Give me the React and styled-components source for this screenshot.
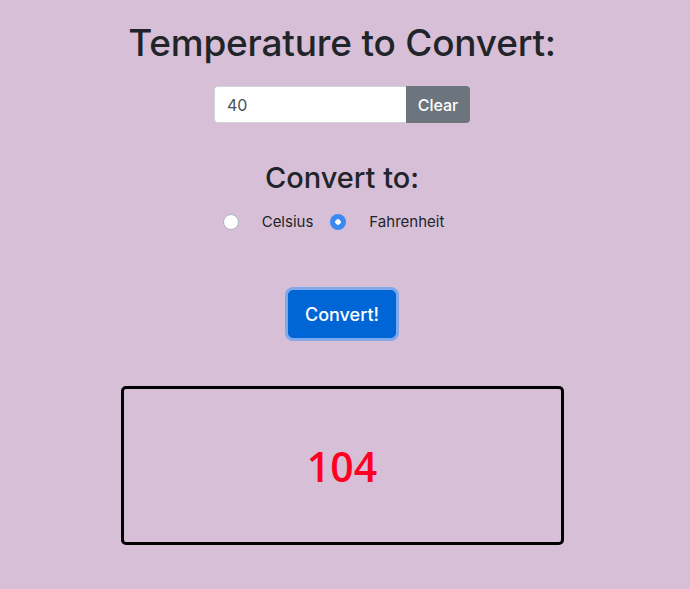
import React, { useState } from "react";
import styled, { createGlobalStyle } from "styled-components";

const GlobalStyle = createGlobalStyle`
  html, body {
    margin: 0;
    padding: 0;
    background: #d8bfd8;
  }
  body {
    font-family: Inter, "Liberation Sans", Arial, sans-serif;
    color: #212529;
  }
`;

const Page = styled.div`
  width: 684px;
  min-height: 589px;
  display: flex;
  flex-direction: column;
  align-items: center;
`;

const Title = styled.h1`
  margin: 21px 0 0;
  font-size: 37px;
  font-weight: 500;
  line-height: 1.2;
  letter-spacing: -0.2px;
`;

const InputGroup = styled.div`
  display: flex;
  margin-top: 21px;
  height: 37px;
`;

const TextInput = styled.input`
  width: 192px;
  box-sizing: border-box;
  border: 1px solid #ced4da;
  border-right: none;
  border-radius: 4px 0 0 4px;
  padding: 0 12px;
  font-family: inherit;
  font-size: 16px;
  color: #495057;
  background: #fff;
  outline: none;
`;

const ClearButton = styled.button`
  width: 64px;
  border: none;
  border-radius: 0 4px 4px 0;
  background: #6c757d;
  color: #fff;
  font-family: inherit;
  font-size: 16px;
  font-weight: 500;
  cursor: pointer;
`;

const Subtitle = styled.h2`
  margin: 38px 0 0;
  font-size: 29px;
  font-weight: 500;
  line-height: 1.2;
`;

const RadioRow = styled.div`
  display: flex;
  align-items: center;
  margin-top: 16px;
  font-size: 15px;
`;

const RadioLabel = styled.label`
  display: flex;
  align-items: center;
  cursor: pointer;
`;

const RadioDot = styled.span`
  width: 16px;
  height: 16px;
  box-sizing: border-box;
  border-radius: 50%;
  border: ${(p) => (p.checked ? "none" : "1px solid #adb5bd")};
  background: ${(p) =>
    p.checked ? "radial-gradient(circle, #fff 0 2.5px, #3b8af2 3px)" : "#fff"};
  margin: 0 23px 0 0;
`;

const HiddenRadio = styled.input`
  display: none;
`;

const RadioText = styled.span`
  margin-right: 17px;
`;

const ConvertButton = styled.button`
  margin-top: 59px;
  width: 108px;
  height: 48px;
  border: 1px solid #0066d6;
  border-radius: 5px;
  background: #0066d6;
  color: #fff;
  font-family: inherit;
  font-size: 18px;
  font-weight: 500;
  box-shadow: 0 0 0 3px rgba(100, 160, 240, 0.75);
  cursor: pointer;
`;

const ResultBox = styled.div`
  margin-top: 48px;
  width: 443px;
  height: 159px;
  box-sizing: border-box;
  border: 3px solid #000;
  border-radius: 5px;
  display: flex;
  align-items: center;
  justify-content: center;
`;

const ResultValue = styled.span`
  color: #ff0022;
  font-family: "Open Sans", sans-serif;
  font-size: 41px;
  font-weight: 600;
`;

const convert = (value, unit) => {
  const n = parseFloat(value);
  if (isNaN(n)) return "";
  const r = unit === "F" ? (n * 9) / 5 + 32 : ((n - 32) * 5) / 9;
  return Math.round(r * 100) / 100;
};

export default function App() {
  const [value, setValue] = useState("40");
  const [unit, setUnit] = useState("F");
  const [result, setResult] = useState(104);

  return (
    <Page>
      <GlobalStyle />
      <Title>Temperature to Convert:</Title>
      <InputGroup>
        <TextInput value={value} onChange={(e) => setValue(e.target.value)} />
        <ClearButton onClick={() => setValue("")}>Clear</ClearButton>
      </InputGroup>
      <Subtitle>Convert to:</Subtitle>
      <RadioRow>
        {[
          ["C", "Celsius"],
          ["F", "Fahrenheit"],
        ].map(([key, label]) => (
          <RadioLabel key={key}>
            <HiddenRadio
              type="radio"
              name="unit"
              checked={unit === key}
              onChange={() => setUnit(key)}
            />
            <RadioDot checked={unit === key} />
            <RadioText>{label}</RadioText>
          </RadioLabel>
        ))}
      </RadioRow>
      <ConvertButton onClick={() => setResult(convert(value, unit))}>
        Convert!
      </ConvertButton>
      <ResultBox>
        <ResultValue>{result}</ResultValue>
      </ResultBox>
    </Page>
  );
}
